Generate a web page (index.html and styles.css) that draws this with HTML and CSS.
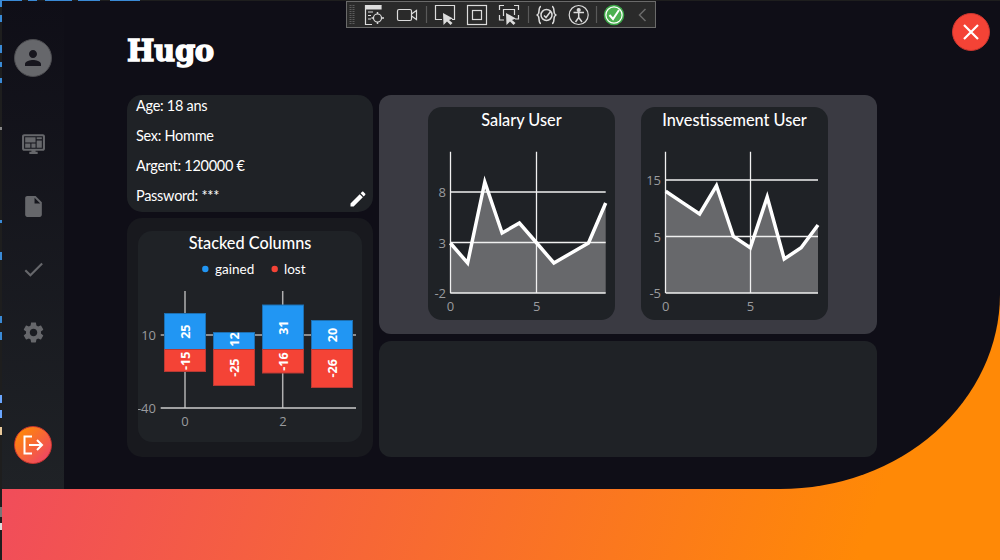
FILE: index.html
```html
<!DOCTYPE html>
<html lang="fr">
<head>
<meta charset="utf-8">
<title>Hugo</title>
<link rel="stylesheet" href="styles.css">
</head>
<body>
<div class="app">
  <div class="strip"></div>
  <div class="window">
    <div class="panel">
      <nav class="sidebar">
        <div class="avatar">
          <svg viewBox="0 0 24 24" width="24" height="24"><path d="M12 12c2.21 0 4-1.79 4-4s-1.79-4-4-4-4 1.79-4 4 1.79 4 4 4zm0 2c-2.67 0-8 1.34-8 4v2h16v-2c0-2.66-5.33-4-8-4z"/></svg>
        </div>
        <div class="nav-icons">
          <svg viewBox="0 0 24 24" width="25" height="25"><path fill-rule="evenodd" d="M21 3H3c-1.1 0-2 .9-2 2v12c0 1.1.9 2 2 2h7v1H8v2h8v-2h-2v-1h7c1.1 0 2-.9 2-2V5c0-1.1-.9-2-2-2zm0 14H3V5h18v12zM4 6h10v5H4zM15 6h5v2h-5zM15 9h5v7h-5zM4 12h5v4H4zM10 12h4v4h-4z"/></svg>
          <svg viewBox="0 0 24 24" width="25" height="25"><path d="M6 2c-1.1 0-1.99.9-1.99 2L4 20c0 1.1.89 2 1.99 2H18c1.1 0 2-.9 2-2V8l-6-6H6zm7 7V3.5L18.5 9H13z"/></svg>
          <svg viewBox="0 0 24 24" width="25" height="25"><path d="M9 16.17 4.83 12l-1.42 1.41L9 19 21 7l-1.41-1.41z"/></svg>
          <svg viewBox="0 0 24 24" width="25" height="25"><path d="M19.14 12.94c.04-.3.06-.61.06-.94 0-.32-.02-.64-.07-.94l2.03-1.58c.18-.14.23-.41.12-.61l-1.92-3.32c-.12-.22-.37-.29-.59-.22l-2.39.96c-.5-.38-1.03-.7-1.62-.94l-.36-2.54c-.04-.24-.24-.41-.48-.41h-3.84c-.24 0-.43.17-.47.41l-.36 2.54c-.59.24-1.13.57-1.62.94l-2.39-.96c-.22-.08-.47 0-.59.22L2.74 8.87c-.12.21-.08.47.12.61l2.03 1.58c-.05.3-.09.63-.09.94s.02.64.07.94l-2.03 1.58c-.18.14-.23.41-.12.61l1.92 3.32c.12.22.37.29.59.22l2.39-.96c.5.38 1.03.7 1.62.94l.36 2.54c.05.24.24.41.48.41h3.84c.24 0 .44-.17.47-.41l.36-2.54c.59-.24 1.13-.56 1.62-.94l2.39.96c.22.08.47 0 .59-.22l1.92-3.32c.12-.22.07-.47-.12-.61l-2.01-1.58zM12 15.6c-1.98 0-3.6-1.62-3.6-3.6s1.62-3.6 3.6-3.6 3.6 1.62 3.6 3.6-1.62 3.6-3.6 3.6z"/></svg>
        </div>
        <div class="logout">
          <svg viewBox="0 0 24 24" width="24" height="24"><path class="logout-mark" d="M11 3.500H3.500V20.500H11M8 12H21M16 7l5 5-5 5"/></svg>
        </div>
      </nav>
      <main class="content">
        <h1 class="name">Hugo</h1>
        <div class="grid">
          <div class="col-left">
            <section class="info">
              <p>Age: 18 ans</p>
              <p>Sex: Homme</p>
              <p>Argent: 120000 €</p>
              <p>Password: ***</p>
              <svg class="edit" viewBox="0 0 24 24" width="20" height="20"><path d="M3 17.25V21h3.75L17.81 9.94l-3.75-3.75L3 17.25zM20.71 7.04c.39-.39.39-1.02 0-1.41l-2.34-2.34c-.39-.39-1.02-.39-1.41 0l-1.83 1.83 3.75 3.75 1.83-1.83z"/></svg>
            </section>
            <section class="stack-wrap">
              <div class="chart stack-chart">
                <h2>Stacked Columns</h2>
                <svg viewBox="138 257 224 185" width="224" height="185">
                  <circle cx="205.3" cy="269" r="3.2" fill="#2196f3"/>
                  <text class="legend" x="215" y="274">gained</text>
                  <circle cx="274.7" cy="269" r="3.2" fill="#f44336"/>
                  <text class="legend" x="284" y="274">lost</text>
                  <path class="sgrid" d="M185 291V408M282.7 291V408M160.7 335H356"/>
                  <path class="sgrid base" d="M160.7 408H356"/>
                  <rect class="gain" x="164.5" y="313.5" width="41" height="36"/>
                  <rect class="gain" x="213.5" y="332.5" width="41" height="17"/>
                  <rect class="gain" x="262.5" y="305" width="41" height="44.5"/>
                  <rect class="gain" x="311.5" y="320.5" width="41" height="29"/>
                  <rect class="loss" x="164.5" y="349.5" width="41" height="22"/>
                  <rect class="loss" x="213.5" y="349.5" width="41" height="36"/>
                  <rect class="loss" x="262.5" y="349.5" width="41" height="23.5"/>
                  <rect class="loss" x="311.5" y="349.5" width="41" height="38"/>
                  <text class="bar" transform="translate(185 331.7) rotate(-90)">25</text>
                  <text class="bar" transform="translate(234 339.5) rotate(-90)">12</text>
                  <text class="bar" transform="translate(283 327.7) rotate(-90)">31</text>
                  <text class="bar" transform="translate(332 335) rotate(-90)">20</text>
                  <text class="bar" transform="translate(185 360.8) rotate(-90)">-15</text>
                  <text class="bar" transform="translate(234 367.7) rotate(-90)">-25</text>
                  <text class="bar" transform="translate(283 361.5) rotate(-90)">-16</text>
                  <text class="bar" transform="translate(332 368.3) rotate(-90)">-26</text>
                  <text class="ax" x="156" y="340" text-anchor="end">10</text>
                  <text class="ax" x="156" y="413" text-anchor="end">-40</text>
                  <text class="ax" x="185" y="426" text-anchor="middle">0</text>
                  <text class="ax" x="283" y="426" text-anchor="middle">2</text>
                </svg>
              </div>
            </section>
          </div>
          <div class="col-right">
            <section class="panel-charts">
              <div class="chart line-chart">
                <h2>Salary User</h2>
                <svg viewBox="428 140 187 180" width="187" height="180">
                  <polygon class="area" points="450.3,293 450.3,243 467.6,263 484.8,182 502.1,233 519.4,223 536.7,243 553.9,263 571.2,253 588.5,243 605.7,203 605.7,293"/>
                  <path class="grid-line" d="M450.5 151.7V293M536.5 151.7V293M450.3 192H605.7M450.3 242.5H605.7M450.3 293H605.7"/>
                  <polyline class="line" points="450.3,243 467.6,263 484.8,182 502.1,233 519.4,223 536.7,243 553.9,263 571.2,253 588.5,243 605.7,203"/>
                  <text class="ax" x="446" y="197" text-anchor="end">8</text>
                  <text class="ax" x="446" y="248" text-anchor="end">3</text>
                  <text class="ax" x="446" y="298" text-anchor="end">-2</text>
                  <text class="ax" x="450.5" y="311" text-anchor="middle">0</text>
                  <text class="ax" x="536.7" y="311" text-anchor="middle">5</text>
                </svg>
              </div>
              <div class="chart line-chart">
                <h2>Investissement User</h2>
                <svg viewBox="641 140 187 180" width="187" height="180">
                  <polygon class="area" points="665.7,293 665.7,191.3 682.6,202.6 699.6,214 716.5,185.6 733.4,236.5 750.3,247.8 767.2,197 784.2,259 801.1,247.8 818,225 818,293"/>
                  <path class="grid-line" d="M665.5 151.7V293M750.5 151.7V293M665.7 180H818M665.7 236.5H818M665.7 293H818"/>
                  <polyline class="line" points="665.7,191.3 682.6,202.6 699.6,214 716.5,185.6 733.4,236.5 750.3,247.8 767.2,197 784.2,259 801.1,247.8 818,225"/>
                  <text class="ax" x="661" y="185" text-anchor="end">15</text>
                  <text class="ax" x="661" y="242" text-anchor="end">5</text>
                  <text class="ax" x="661" y="298" text-anchor="end">-5</text>
                  <text class="ax" x="665.7" y="311" text-anchor="middle">0</text>
                  <text class="ax" x="750.5" y="311" text-anchor="middle">5</text>
                </svg>
              </div>
            </section>
            <section class="empty"></section>
          </div>
        </div>
      </main>
    </div>
  </div>
</div>
<div class="topline"></div>
<div class="close">
  <svg viewBox="0 0 24 24" width="24" height="24"><path d="M5 5l14 14M19 5L5 19"/></svg>
</div>
<div class="toolbar">
  <svg viewBox="346 1 310 27" width="310" height="27" fill="none" stroke="#dcdcdc" stroke-width="1.2">
    <path d="M350.5 5V24M353.5 5V24" stroke="#5c5c5c" stroke-dasharray="1 1" stroke-width="2"/>
    <path d="M381.5 5.5H365.5V24.5H372"/>
    <path d="M366 6H381V9H366z" fill="#dcdcdc"/>
    <path d="M368 12H373M368 15.5H371M368 19H371"/>
    <circle cx="377.5" cy="18" r="4"/>
    <path d="M377.5 12V14M377.5 22V24M371.5 18H373.5M381.5 18H384" stroke-width="1.5"/>
    <rect x="397.5" y="9.5" width="14" height="11" rx="1.5"/>
    <path d="M411.5 14L416.5 10.5V19.5L411.5 16"/>
    <path d="M426.5 6V23M528.5 6V23M596.5 6V23" stroke="#5a5a5a"/>
    <path d="M442 19.5H435.5V5.5H454.5V19.5H452"/>
    <path d="M443 13L443.5 25L447 21.5L450.5 25L452.5 23L449 20L453 18.5Z" fill="#dcdcdc" stroke="none"/>
    <rect x="467.5" y="5.5" width="19" height="19"/>
    <rect x="472.5" y="10.5" width="9" height="9"/>
    <path d="M499.5 10V5.5H504M514 5.5H518.5V10M499.5 15V20H504M518.5 15V19H515"/>
    <path d="M503.5 16V9.5H514.5V15"/>
    <path d="M506 13L506.5 25L510 21.5L513.5 25L515.5 23L512 20L516 18.5Z" fill="#dcdcdc" stroke="none"/>
    <path d="M541 6.5C538.5 6.5 539.5 11 538.5 13.5C538 14.5 537 15 536.5 15C537 15 538 15.5 538.5 16.5C539.5 19 538.5 23.5 541 23.5M552 6.5C554.5 6.500 553.5 11 554.5 13.5C555 14.5 556 15 556.5 15C556 15 555 15.5 554.5 16.5C553.5 19 554.5 23.5 552 23.5" stroke-width="1.5"/>
    <circle cx="546.5" cy="15" r="5.5" stroke-width="1.5"/>
    <path d="M544 15.5L546 17.5L551 11" stroke-width="1.5"/>
    <circle cx="578.7" cy="15" r="9.5"/>
    <circle cx="578.7" cy="10" r="1.5" fill="#dcdcdc"/>
    <path d="M573.5 12.5H584M578.7 13V17.5M578.7 17.5L575.5 22M578.7 17.5L582 22" stroke-width="1.5"/>
    <circle cx="614" cy="15" r="9.5" fill="#fff" stroke="#3aa845" stroke-width="1.5"/>
    <circle cx="614" cy="15" r="7.5" fill="#4cb050" stroke="none"/>
    <path d="M609.5 15L613 19L619 10" stroke="#fff" stroke-width="2"/>
    <path d="M645.5 9L639.5 15L645.5 21" stroke="#6b6b6b" stroke-width="1.5"/>
  </svg>
</div>
</body>
</html>
```

FILE: styles.css
```css
* { box-sizing: border-box; }
html, body { margin: 0; height: 100%; }
body {
  width: 1000px;
  height: 560px;
  overflow: hidden;
  background: #0f0e17;
  font-family: "Lato", "Noto Sans", sans-serif;
  color: #fff;
}
.app { display: flex; width: 1000px; height: 560px; }
.strip {
  flex: 0 0 2px;
  background: linear-gradient(#3a8ad6 0 7px, #1e1e1e 7px 15px, #3a8ad6 15px 22px, #1e1e1e 22px 45px, #3a8ad6 45px 53px, #1e1e1e 53px 62px, #3a8ad6 62px 67px, #1e1e1e 67px 78px, #3a8ad6 78px 83px, #1e1e1e 83px 127px, #888 127px 130px, #1e1e1e 130px 220px, #3a8ad6 220px 223px, #1e1e1e 223px 252px, #3a8ad6 252px 260px, #1e1e1e 260px 316px, #3a8ad6 316px 323px, #1e1e1e 323px 332px, #3a8ad6 332px 340px, #1e1e1e 340px 395px, #6aa6ff 395px 403px, #1e1e1e 403px 410px, #6aa6ff 410px 418px, #1e1e1e 418px 427px, #e8c89a 427px 435px, #1e1e1e 435px 507px, #777 507px 517px, #1e1e1e 517px 523px, #ddd 523px 530px, #1e1e1e 530px 560px);
}
.topline {
  position: absolute;
  left: 0;
  top: 0;
  width: 1000px;
  height: 1px;
  background: linear-gradient(90deg, #3a8ad6 0 22px, #1e1e1e 22px 28px, #3a8ad6 28px 37px, #1e1e1e 37px 45px, #3a8ad6 45px 72px, #1e1e1e 72px 78px, #3a8ad6 78px 100px, #1e1e1e 100px 110px, #3a8ad6 110px 140px, #1e1e1e 140px);
}
.window {
  flex: 1;
  background: linear-gradient(108deg, #ef4565 4%, #ff8906 88%);
}
.panel {
  display: flex;
  height: 489px;
  background: #0f0e17;
  border-bottom-right-radius: 220px 195px;
}
.sidebar {
  flex: 0 0 62px;
  display: flex;
  flex-direction: column;
  align-items: center;
  padding: 39px 0 25px;
  background: linear-gradient(#0f0e17, #1f2226);
}
.sidebar svg { fill: #66676b; display: block; }
.avatar {
  width: 38px;
  height: 38px;
  border-radius: 50%;
  background: #66676b;
  border: 1px solid #4c4c50;
  display: flex;
  align-items: center;
  justify-content: center;
}
.sidebar .avatar svg { fill: #17161e; }
.nav-icons {
  display: flex;
  flex-direction: column;
  align-items: center;
  gap: 38.3px;
  margin-top: 53.5px;
  margin-bottom: auto;
}
.logout {
  width: 38px;
  height: 38px;
  border-radius: 50%;
  background: linear-gradient(135deg, #ff8906 10%, #ef4565 90%);
  border: 1px solid #c8352f;
  display: flex;
  align-items: center;
  justify-content: center;
}
.sidebar .logout svg { fill: none; }
.logout-mark { fill: none; stroke: #fff; stroke-width: 2; }
.content {
  flex: 1;
  padding: 33px 0 0 63px;
}
.name {
  margin: 0 0 26px;
  height: 36px;
  font: 700 29px/36px "DejaVu Serif", serif;
  letter-spacing: -.3px;
  -webkit-text-stroke: 1.4px #fff;
}
.grid { display: flex; gap: 6px; width: 750px; }
.col-left { flex: 0 0 246px; display: flex; flex-direction: column; gap: 6px; }
.col-right { flex: 0 0 498px; display: flex; flex-direction: column; gap: 7px; }
.info {
  position: relative;
  height: 117px;
  padding: 0 9px;
  background: #1f2226;
  border-radius: 15px;
}
.info p { margin: 0 0 8px; font-size: 14.5px; line-height: 22px; letter-spacing: -.28px; }
.edit { position: absolute; right: 5px; bottom: 3px; fill: #fff; }
.stack-wrap {
  height: 239px;
  padding: 13px 11px 15px;
  background: #18191e;
  border-radius: 15px;
}
.chart {
  background: #1f2226;
  border-radius: 14px;
  overflow: hidden;
}
.chart h2 {
  margin: 0;
  text-align: center;
  font-size: 16.3px;
  font-weight: 500;
  line-height: 26px;
}
.chart svg { display: block; }
.stack-chart h2 { height: 26px; line-height: 24px; }
.line-chart { width: 187px; height: 213px; }
.line-chart h2 { height: 33px; }
.panel-charts {
  height: 239px;
  display: flex;
  align-items: center;
  gap: 26px;
  padding: 0 49px 2px;
  background: #3a3a42;
  border-radius: 12px;
}
.empty { height: 116px; background: #1f2226; border-radius: 12px; }
.legend { fill: #fff; font: 13.5px "Lato", sans-serif; }
.sgrid { stroke: #b0b0b0; stroke-width: 1.5; fill: none; }
.sgrid.base { stroke: #cccccc; }
.gain { fill: #2196f3; stroke: #1d6fb0; stroke-width: 1; }
.loss { fill: #f44336; stroke: #b83a34; stroke-width: 1; }
.bar { fill: #fff; font: 700 12.5px "Open Sans", sans-serif; text-anchor: middle; dominant-baseline: central; }
.ax { fill: #9a9b9e; font: 13px "Open Sans", sans-serif; }
.area { fill: #67686b; }
.grid-line { stroke: #f0f0f0; stroke-width: 1.3; fill: none; }
.line { fill: none; stroke: #fff; stroke-width: 3.5; }
.close {
  position: absolute;
  left: 952px;
  top: 13px;
  width: 38px;
  height: 38px;
  border-radius: 50%;
  background: #f44336;
  border: 1px solid #c8352f;
  display: flex;
  align-items: center;
  justify-content: center;
}
.close path { stroke: #fff; stroke-width: 2.2; fill: none; }
.toolbar {
  position: absolute;
  left: 346px;
  top: 1px;
  width: 310px;
  height: 27px;
  background: #2a2a2a;
  outline: 1px solid #6a6a6a;
  outline-offset: -1px;
}
.toolbar svg { display: block; }
```
